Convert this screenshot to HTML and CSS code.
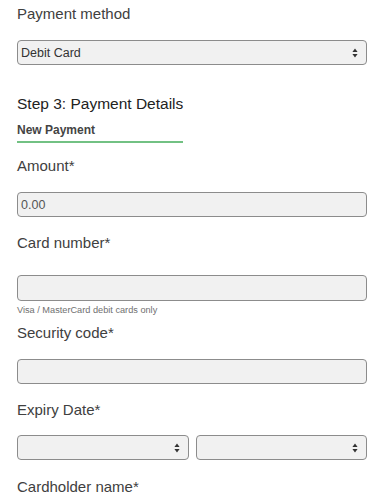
FILE: index.html
```html
<!DOCTYPE html>
<html>
<head>
<meta charset="utf-8">
<link rel="stylesheet" href="styles.css">
</head>
<body>
<div class="page">
  <div class="label l-first">Payment method</div>
  <div class="field select sel-method">
    <span class="val">Debit Card</span>
    <svg class="arrows" width="6" height="10" viewBox="0 0 6 10"><path d="M3 0.5 L5.6 4 H0.4 Z M3 9.5 L5.6 6 H0.4 Z" fill="#333"/></svg>
  </div>
  <div class="heading">Step 3: Payment Details</div>
  <div class="tabrow"><div class="tab">New Payment</div></div>
  <div class="label l-amount">Amount*</div>
  <div class="field input f-amount"><span class="val muted">0.00</span></div>
  <div class="label l-card">Card number*</div>
  <div class="field input f-card"></div>
  <div class="help">Visa / MasterCard debit cards only</div>
  <div class="label l-sec">Security code*</div>
  <div class="field input f-sec"></div>
  <div class="label l-exp">Expiry Date*</div>
  <div class="exp-row">
    <div class="field select">
      <span class="val"></span>
      <svg class="arrows" width="6" height="10" viewBox="0 0 6 10"><path d="M3 0.5 L5.6 4 H0.4 Z M3 9.5 L5.6 6 H0.4 Z" fill="#333"/></svg>
    </div>
    <div class="field select">
      <span class="val"></span>
      <svg class="arrows" width="6" height="10" viewBox="0 0 6 10"><path d="M3 0.5 L5.6 4 H0.4 Z M3 9.5 L5.6 6 H0.4 Z" fill="#333"/></svg>
    </div>
  </div>
  <div class="label l-name">Cardholder name*</div>
</div>
</body>
</html>
```

FILE: styles.css
```css
* { box-sizing: border-box; }
html, body { margin: 0; padding: 0; background: #fff; }
body {
  font-family: "Liberation Sans", Arial, sans-serif;
  color: #444;
  overflow: hidden;
}
.page {
  padding: 0 8px 0 17px;
  width: 375px;
}
.label {
  font-size: 15px;
  line-height: 18px;
  height: 18px;
  color: #404040;
}
.l-first { margin-top: 5px; }
.field {
  height: 25px;
  border: 1px solid #8c8c8c;
  border-radius: 4px;
  background: #f1f1f1;
  display: flex;
  align-items: center;
  padding: 0 8px 0 3px;
  font-size: 12.5px;
  color: #333;
}
.select { justify-content: space-between; }
.arrows { display: block; }
.val { line-height: 14px; }
.muted { color: #555; }
.sel-method { margin-top: 17px; }
.heading {
  margin-top: 30px;
  font-size: 15.5px;
  line-height: 18px;
  color: #222;
  font-weight: 500;
}
.tabrow { margin-top: 9px; }
.tab {
  width: 166px;
  font-size: 12px;
  font-weight: bold;
  color: #444;
  line-height: 16px;
  padding-bottom: 3px;
  border-bottom: 2px solid #72c183;
}
.l-amount { margin-top: 14px; }
.f-amount { margin-top: 17px; }
.l-card { margin-top: 17px; }
.f-card { margin-top: 23px; height: 26px; }
.help {
  margin-top: 3px;
  font-size: 9.2px;
  line-height: 12px;
  color: #707070;
}
.l-sec { margin-top: 8px; }
.f-sec { margin-top: 17px; }
.l-exp { margin-top: 17px; }
.exp-row {
  margin-top: 16px;
  display: grid;
  grid-template-columns: 172px 171px;
  gap: 7px;
}
.l-name { margin-top: 18px; }
```
